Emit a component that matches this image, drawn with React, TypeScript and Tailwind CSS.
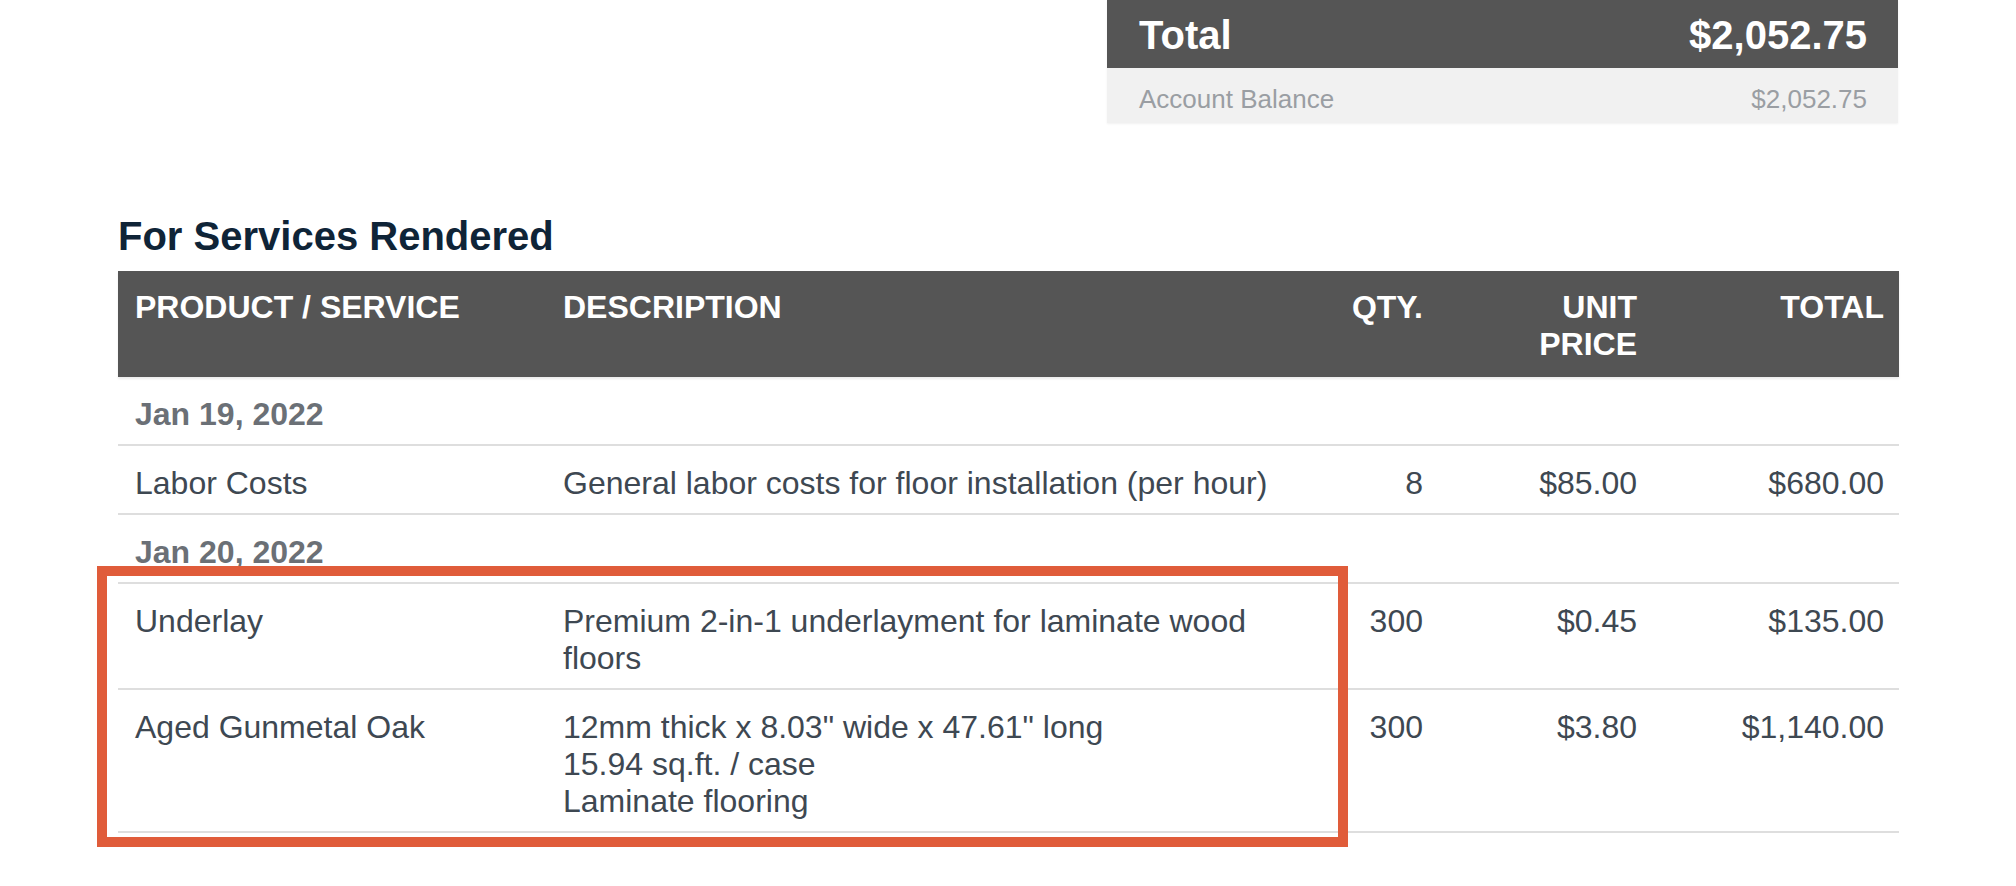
import React from "react";

type Item = {
  name: string;
  lines: string[];
  qty: string;
  unit: string;
  total: string;
};

type Group = {
  date: string;
  items: Item[];
};

const groups: Group[] = [
  {
    date: "Jan 19, 2022",
    items: [
      {
        name: "Labor Costs",
        lines: ["General labor costs for floor installation (per hour)"],
        qty: "8",
        unit: "$85.00",
        total: "$680.00",
      },
    ],
  },
  {
    date: "Jan 20, 2022",
    items: [
      {
        name: "Underlay",
        lines: ["Premium 2-in-1 underlayment for laminate wood floors"],
        qty: "300",
        unit: "$0.45",
        total: "$135.00",
      },
      {
        name: "Aged Gunmetal Oak",
        lines: [
          '12mm thick x 8.03" wide x 47.61" long',
          "15.94 sq.ft. / case",
          "Laminate flooring",
        ],
        qty: "300",
        unit: "$3.80",
        total: "$1,140.00",
      },
    ],
  },
];

const cols = "grid grid-cols-[428px_784px_110px_214px_245px]";
const cell = "pt-[19px] pb-[11px] border-b-2 border-[#dedede] leading-[37px]";

function App() {
  return (
    <div className="relative w-[2016px] min-h-[886px] bg-white pl-[118px] pr-[117px] font-['Liberation_Sans',Arial,sans-serif]">
      {/* Totals box */}
      <div className="flex justify-end">
        <div className="w-[791px] mr-[1px] shadow-[0_1px_2px_rgba(0,0,0,0.06)]">
          <div className="flex items-center justify-between h-[68px] bg-[#555555] pl-[32px] pr-[31px] pt-[2px] text-white font-bold text-[40px] leading-[68px]">
            <span>Total</span>
            <span>$2,052.75</span>
          </div>
          <div className="flex justify-between bg-[#f1f1f1] pl-[32px] pr-[31px] pt-[16px] pb-[9px] text-[#9a9ea3] text-[26px] leading-[30px]">
            <span>Account Balance</span>
            <span>$2,052.75</span>
          </div>
        </div>
      </div>

      {/* Services */}
      <h2 className="mt-[93px] mb-[15px] text-[40px] leading-[40px] font-bold text-[#0f2437]">
        For Services Rendered
      </h2>

      <div className="text-[32px]">
        <div className={`${cols} bg-[#555555] text-white font-bold leading-[37px] h-[106px] shadow-[0_2px_2px_rgba(0,0,0,0.08)]`}>
          <div className="pl-[17px] pt-[18px]">PRODUCT / SERVICE</div>
          <div className="pl-[17px] pt-[18px]">DESCRIPTION</div>
          <div className="pr-[17px] pt-[18px] text-right">QTY.</div>
          <div className="pr-[17px] pt-[18px] text-right">
            UNIT
            <br />
            PRICE
          </div>
          <div className="pr-[15px] pt-[18px] text-right">TOTAL</div>
        </div>

        {groups.map((g) => (
          <div key={g.date}>
            <div className={`${cell} pl-[17px] font-bold text-[#6b7076]`}>{g.date}</div>
            {g.items.map((it) => (
              <div key={it.name} className={`${cols} text-[#3e4852]`}>
                <div className={`${cell} pl-[17px]`}>{it.name}</div>
                <div className={`${cell} pl-[17px] pr-[16px]`}>
                  {it.lines.map((l) => (
                    <div key={l}>{l}</div>
                  ))}
                </div>
                <div className={`${cell} pr-[17px] text-right`}>{it.qty}</div>
                <div className={`${cell} pr-[17px] text-right`}>{it.unit}</div>
                <div className={`${cell} pr-[15px] text-right`}>{it.total}</div>
              </div>
            ))}
          </div>
        ))}
      </div>

      {/* highlight annotation */}
      <div className="absolute left-[97px] top-[566px] w-[1251px] h-[281px] border-[10px] border-[#e05c3a] pointer-events-none" />
    </div>
  );
}

export default App;
